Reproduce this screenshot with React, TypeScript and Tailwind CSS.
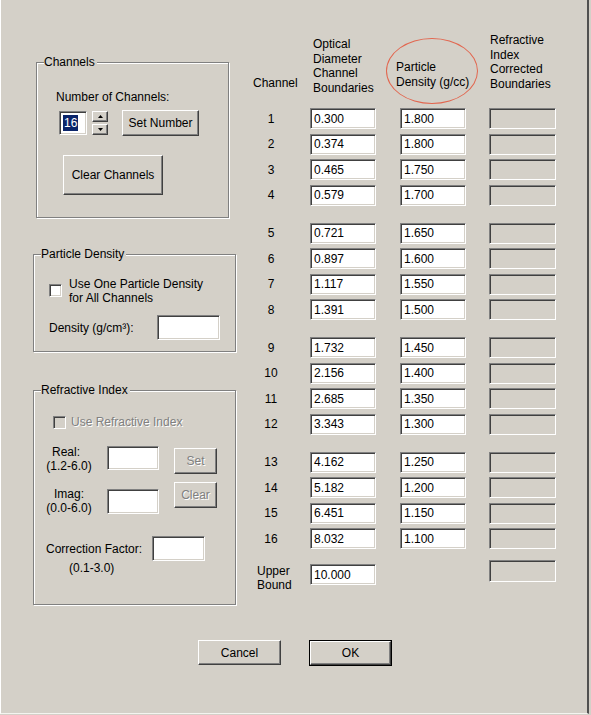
import { ReactNode } from 'react';
import clsx from 'clsx';

const diameters = [
  '0.300', '0.374', '0.465', '0.579',
  '0.721', '0.897', '1.117', '1.391',
  '1.732', '2.156', '2.685', '3.343',
  '4.162', '5.182', '6.451', '8.032',
];

const densities = [
  '1.800', '1.800', '1.750', '1.700',
  '1.650', '1.600', '1.550', '1.500',
  '1.450', '1.400', '1.350', '1.300',
  '1.250', '1.200', '1.150', '1.100',
];

// sunken edit field (classic 3D look)
function Edit({ className, disabled, children }: { className?: string; disabled?: boolean; children?: ReactNode }) {
  return (
    <div
      className={clsx(
        'flex items-center pl-[3px] border border-t-[#808080] border-l-[#808080] border-b-white border-r-white shadow-[inset_1px_1px_0_#404040,inset_-1px_-1px_0_#d4d0c8]',
        disabled ? 'bg-[#d4d0c8]' : 'bg-white',
        className
      )}
    >
      {children}
    </div>
  );
}

// raised push button
function Button({ className, disabled, children }: { className?: string; disabled?: boolean; children?: ReactNode }) {
  return (
    <div
      className={clsx(
        'flex items-center justify-center bg-[#d4d0c8] border border-t-white border-l-white border-b-[#404040] border-r-[#404040] shadow-[inset_-1px_-1px_0_#808080]',
        disabled && 'text-[#808080] [text-shadow:1px_1px_0_#fff]',
        className
      )}
    >
      {children}
    </div>
  );
}

function CheckBox({ disabled }: { disabled?: boolean }) {
  return (
    <div
      className={clsx(
        'w-[13px] h-[13px] shrink-0 border border-t-[#808080] border-l-[#808080] border-b-white border-r-white shadow-[inset_1px_1px_0_#404040,inset_-1px_-1px_0_#d4d0c8]',
        disabled ? 'bg-[#d4d0c8]' : 'bg-white'
      )}
    />
  );
}

function GroupBox({ title, className, children }: { title: string; className?: string; children?: ReactNode }) {
  return (
    <div className={clsx('relative border border-[#808080] shadow-[inset_1px_1px_0_#fff,1px_1px_0_#fff]', className)}>
      <span className="absolute -top-[8px] left-[7px] bg-[#d4d0c8] pr-[2px]">{title}</span>
      {children}
    </div>
  );
}

function SpinArrow({ down }: { down?: boolean }) {
  return (
    <svg width="5" height="3" viewBox="0 0 5 3">
      <path d={down ? 'M0 0H5L2.5 3Z' : 'M0 3H5L2.5 0Z'} fill="#000" />
    </svg>
  );
}

function ChannelRow({ label, diameter, density }: { label: ReactNode; diameter: string; density?: string }) {
  return (
    <div className="flex items-center h-[21px]">
      <div className="w-[50px] text-center">{label}</div>
      <Edit className="ml-[14px] w-[66px] h-[21px]">{diameter}</Edit>
      {density !== undefined ? (
        <Edit className="ml-[24px] w-[66px] h-[21px]">{density}</Edit>
      ) : (
        <div className="ml-[24px] w-[66px]" />
      )}
      <Edit disabled className="ml-[23px] w-[67px] h-[21px]" />
    </div>
  );
}

export default function App() {
  const groups = [0, 1, 2, 3];

  return (
    <div className="relative w-[591px] h-[715px] bg-[#d4d0c8] text-black text-[12px] leading-[14px] font-['Liberation_Sans',Arial,sans-serif] overflow-hidden">
      <div className="w-[589px] h-[714px] flex flex-col border-l border-l-white border-b border-b-[#f4f4f0] border-r-2 border-r-[#505050]">
        <div className="flex h-[640px]">
          {/* left side: setting groups */}
          <div className="w-[245px] pl-[32px] flex flex-col">
            <GroupBox title="Channels" className="mt-[62px] ml-[3px] w-[193px] h-[156px]">
              <div className="pt-[27px] pl-[19px] flex flex-col">
                <span>Number of Channels:</span>
                <div className="flex items-start mt-[7px]">
                  <Edit className="ml-[3px] w-[28px] h-[24px] pl-[3px]">
                    <span className="bg-[#0a246a] text-white px-[1px] leading-[16px]">16</span>
                  </Edit>
                  <div className="ml-[5px] flex flex-col gap-[2px]">
                    <Button className="w-[16px] h-[11px]"><SpinArrow /></Button>
                    <Button className="w-[16px] h-[11px]"><SpinArrow down /></Button>
                  </div>
                  <Button className="ml-[14px] -mt-[1px] w-[77px] h-[26px]">Set Number</Button>
                </div>
                <Button className="mt-[19px] ml-[7px] w-[100px] h-[40px]">Clear Channels</Button>
              </div>
            </GroupBox>

            <GroupBox title="Particle Density" className="mt-[36px] w-[203px] h-[98px]">
              <div className="pt-[22px] pl-[15px] flex flex-col">
                <div className="flex items-start">
                  <div className="mt-[7px]"><CheckBox /></div>
                  <span className="ml-[7px]">Use One Particle Density<br />for All Channels</span>
                </div>
                <div className="flex items-center mt-[10px]">
                  <span className="w-[108px]">Density (g/cm³):</span>
                  <Edit className="w-[63px] h-[25px]" />
                </div>
              </div>
            </GroupBox>

            <GroupBox title="Refractive Index" className="mt-[38px] w-[203px] h-[215px]">
              <div className="pt-[24px] pl-[11px] flex flex-col">
                <div className="flex items-center ml-[8px] text-[#808080] [text-shadow:1px_1px_0_#fff]">
                  <CheckBox disabled />
                  <span className="ml-[5px]">Use Refractive Index</span>
                </div>
                <div className="flex items-start mt-[16px]">
                  <div className="w-[48px] flex flex-col text-center">
                    <span><span className="pr-[6px]">Real:</span><br />(1.2-6.0)</span>
                    <span className="mt-[14px]">Imag:<br />(0.0-6.0)</span>
                  </div>
                  <div className="ml-[14px] mt-[1px] flex flex-col gap-[19px]">
                    <Edit className="w-[52px] h-[24px]" />
                    <Edit className="w-[52px] h-[25px]" />
                  </div>
                  <div className="ml-[15px] mt-[3px] flex flex-col gap-[8px]">
                    <Button disabled className="w-[43px] h-[26px]">Set</Button>
                    <Button disabled className="w-[43px] h-[26px]">Clear</Button>
                  </div>
                </div>
                <div className="flex items-start mt-[21px] ml-[1px]">
                  <div className="w-[106px] flex flex-col">
                    <span className="mt-[6px]">Correction Factor:</span>
                    <span className="mt-[5px] ml-[23px]">(0.1-3.0)</span>
                  </div>
                  <Edit className="w-[53px] h-[25px]" />
                </div>
              </div>
            </GroupBox>
          </div>

          {/* right side: channel table */}
          <div className="flex flex-col pt-[35px]">
            <div className="flex items-end h-[60px] leading-[14.5px]">
              <div className="w-[50px] pl-[7px] mb-[5px]">Channel</div>
              <div className="ml-[14px] w-[66px] pl-[3px]">Optical<br />Diameter<br />Channel<br />Boundaries</div>
              <div className="ml-[20px] w-[70px] mb-[6px] whitespace-nowrap">Particle<br />Density (g/cc)</div>
              <div className="ml-[24px] w-[70px] mb-[4px]">Refractive<br />Index<br />Corrected<br />Boundaries</div>
            </div>

            {groups.map((g) => (
              <div key={g} className={clsx('flex flex-col gap-[4.5px]', g === 0 ? 'mt-[13px]' : 'mt-[17px]')}>
                {[0, 1, 2, 3].map((r) => {
                  const i = g * 4 + r;
                  return <ChannelRow key={i} label={i + 1} diameter={diameters[i]} density={densities[i]} />;
                })}
              </div>
            ))}

            <div className="mt-[15px] flex items-start">
              <div className="w-[50px] pl-[11px]">Upper<br />Bound</div>
              <Edit className="ml-[14px] w-[66px] h-[21px]">10.000</Edit>
              <div className="ml-[24px] w-[66px]" />
              <Edit disabled className="ml-[23px] -mt-[4px] w-[67px] h-[22px]" />
            </div>
          </div>
        </div>

        {/* dialog buttons */}
        <div className="flex items-start pl-[197px] gap-[28px]">
          <Button className="w-[83px] h-[25px]">Cancel</Button>
          <div className="border border-black">
            <Button className="w-[81px] h-[24px]">OK</Button>
          </div>
        </div>
      </div>

      {/* hand-drawn highlight around the density header */}
      <div className="absolute left-[386px] top-[38px] w-[92px] h-[66px] rounded-[50%] border-[1.5px] border-[#e2664f] pointer-events-none" />
    </div>
  );
}
